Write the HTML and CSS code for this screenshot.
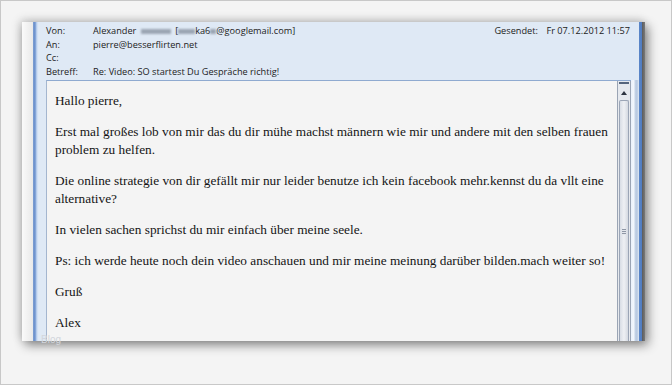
FILE: index.html
```html
<!DOCTYPE html>
<html lang="de">
<head>
<meta charset="utf-8">
<title>Mail</title>
<link rel="stylesheet" href="styles.css">
</head>
<body>
<div class="frame">
  <div class="window">
    <div class="edge-left"></div>
    <div class="edge-blue"></div>
    <div class="main">
      <div class="header">
        <div class="row">
          <span class="label">Von:</span>
          <span class="value">Alexander <span class="blur b1"></span> [<span class="blur b2"></span>ka6<span class="blur b3"></span>@googlemail.com]</span>
          <span class="sent"><span class="sent-label">Gesendet:</span><span>Fr 07.12.2012 11:57</span></span>
        </div>
        <div class="row"><span class="label">An:</span><span class="value">pierre@besserflirten.net</span></div>
        <div class="row"><span class="label">Cc:</span><span class="value"></span></div>
        <div class="row"><span class="label">Betreff:</span><span class="value">Re: Video: SO startest Du Gespräche richtig!</span></div>
      </div>
      <div class="content">
        <div class="msg">
          <div class="text">
            <p>Hallo pierre,</p>
            <p>Erst mal großes lob von mir das du dir mühe machst männern wie mir und andere mit den selben frauen problem zu helfen.</p>
            <p>Die online strategie von dir gefällt mir nur leider benutze ich kein facebook mehr.kennst du da vllt eine alternative?</p>
            <p>In vielen sachen sprichst du mir einfach über meine seele.</p>
            <p>Ps: ich werde heute noch dein video anschauen und mir meine meinung darüber bilden.mach weiter so!</p>
            <p>Gruß</p>
            <p>Alex</p>
          </div>
          <div class="scrollbar">
            <div class="sb-top"></div>
            <div class="sb-up"></div>
            <div class="sb-thumb"><div class="grip"></div></div>
          </div>
        </div>
        <div class="stripes"></div>
      </div>
    </div>
    <div class="edge-right"></div>
  </div>
  <span class="watermark">Blog</span>
</div>
</body>
</html>
```

FILE: styles.css
```css
* { box-sizing: border-box; }
html, body { margin: 0; padding: 0; }
body {
  width: 672px;
  height: 385px;
  overflow: hidden;
  background: #f4f4f4;
}
.frame {
  position: relative;
  width: 672px;
  height: 385px;
  border: 1px solid #c8c8c8;
  background: #f4f4f4;
  padding: 21px 0 0 21px;
}
.window {
  display: flex;
  width: 623px;
  height: 319px;
  box-shadow: 3px 4px 10px rgba(0,0,0,0.45), -2px -2px 9px rgba(0,0,0,0.16);
  background: #fff;
}
.edge-left {
  width: 11px;
  background: linear-gradient(to right, #fafafa, #e9e9e9);
}
.edge-blue {
  width: 6px;
  background: linear-gradient(to right, #7c9ed2 0, #6b90cc 2px, #9fbbe4 3px, #c9daf1 4px, #e4edf8 6px);
}
.main {
  flex: 1;
  display: flex;
  flex-direction: column;
  background: #dfe9f5;
  font-family: "Open Sans", "Liberation Sans", sans-serif;
  font-size: 9.2px;
  color: #222;
}
.header {
  height: 58px;
  padding: 2px 0 0 7px;
}
.row {
  display: flex;
  height: 13.7px;
  line-height: 13.7px;
  white-space: nowrap;
}
.label { width: 47px; }
.value { flex: 1; }
.sent { display: flex; padding-right: 9px; }
.sent-label { width: 52px; }
.blur {
  display: inline-block;
  height: 5px;
  vertical-align: middle;
  background: #8b95a3;
  filter: blur(1.2px);
  opacity: 0.8;
}
.b1 { width: 30px; margin: 0 2px; }
.b2 { width: 17px; }
.b3 { width: 6px; }
.content {
  flex: 1;
  display: flex;
  padding-left: 7px;
  min-height: 0;
}
.msg {
  flex: 1;
  display: flex;
  background: #f4f4f4;
  border-top: 1px solid #8faad0;
  border-left: 1px solid #a4b6cf;
  min-height: 0;
}
.text {
  flex: 1;
  padding: 11px 0 0 8px;
  font-family: "Liberation Serif", "Times New Roman", serif;
  font-size: 13.3px;
  line-height: 18px;
  color: #141414;
}
.text p { margin: 0 0 13px; }
.scrollbar {
  width: 14px;
  display: flex;
  flex-direction: column;
  border-left: 1px solid #9aa4b4;
  border-right: 1px solid #9aa4b4;
  background: #e6e9ee;
}
.sb-top {
  height: 4px;
  margin: 1px 1px 0;
  border-top: 2px solid #56657c;
}
.sb-up {
  height: 14px;
  position: relative;
}
.sb-up::after {
  content: "";
  position: absolute;
  left: 3px;
  top: 5px;
  border-left: 3.5px solid transparent;
  border-right: 3.5px solid transparent;
  border-bottom: 4px solid #2e3440;
}
.sb-thumb {
  flex: 1;
  margin: 0 1px;
  border: 1px solid #9ba5b6;
  border-bottom: none;
  border-radius: 2px 2px 0 0;
  background: linear-gradient(to right, #d8dde5, #eef0f4 50%, #d4d9e1);
  padding-top: 128px;
}
.grip {
  height: 6px;
  margin: 0 2px;
  background: repeating-linear-gradient(to bottom, #8e97a6 0, #8e97a6 1px, #e4e7ec 1px, #e4e7ec 2px);
}
.stripes {
  width: 8px;
  background: linear-gradient(to right, #eaf1fb 0, #f3f7fc 3px, #c4d3e7 4px, #b7c8e0 6px, #dfe9f5 8px);
}
.edge-right {
  width: 6px;
  background: linear-gradient(to right, #5a86c8 0, #4f7bc0 3px, #5b5b5b 3px, #7a7a7a 6px);
}
.watermark {
  position: absolute;
  left: 40px;
  top: 333px;
  font-family: "Liberation Sans", sans-serif;
  font-size: 10px;
  color: #d2d6dc;
}
```
